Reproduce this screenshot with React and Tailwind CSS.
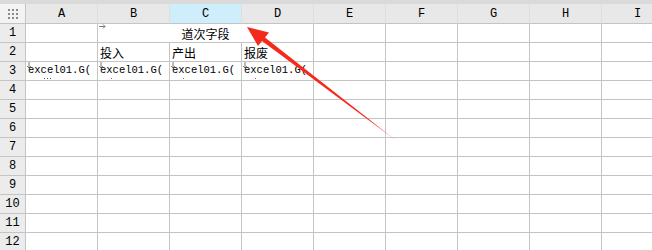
const cols = ["A", "B", "C", "D", "E", "F", "G", "H", "I"];
const rows = [1, 2, 3, 4, 5, 6, 7, 8, 9, 10, 11, 12];

const mono = { fontFamily: "'Liberation Mono', 'DejaVu Sans Mono', monospace" };
const cjk = { fontFamily: "'Noto Sans CJK SC', 'Noto Sans', sans-serif" };

function Cell({ children, className = "" }) {
  return (
    <div
      className={`relative w-[72px] shrink-0 h-[19px] border-r border-b border-[#c4c4c4] overflow-hidden ${className}`}
    >
      {children}
    </div>
  );
}

// little expand markers drawn by the sheet designer
function DownMark() {
  return (
    <svg className="absolute left-[0px] top-[0px]" width="6" height="7">
      <path d="M3 0 V6 M1 4 L3 6 L5 4" stroke="#7a7a7a" strokeWidth="1" fill="none" />
    </svg>
  );
}

function RightMark() {
  return (
    <svg className="absolute left-[1px] top-[0px]" width="7" height="5">
      <path d="M0 2.5 H6 M4 0.5 L6 2.5 L4 4.5" stroke="#7a7a7a" strokeWidth="1" fill="none" />
    </svg>
  );
}

function FormulaCell({ dots }) {
  return (
    <Cell>
      <DownMark />
      <span
        className="absolute left-[2px] top-[3px] text-[10.5px] leading-none text-black whitespace-nowrap"
        style={mono}
      >
        excel01.G(
      </span>
      {dots ? (
        <svg className="absolute left-[18px] top-[16px]" width="10" height="2">
          <rect x="0" y="0" width="1" height="1" fill="#555" />
          <rect x="3" y="0" width="1" height="1" fill="#555" />
          <rect x="6" y="0" width="1" height="1" fill="#555" />
        </svg>
      ) : (
        <span className="absolute left-[13px] top-[16px] w-[1px] h-[1px] bg-[#b040b0]" />
      )}
    </Cell>
  );
}

export default function App() {
  return (
    <div className="relative w-[652px] h-[250px] overflow-hidden bg-white">
      <div className="h-[4px] bg-[#dadada]" />

      {/* column headers */}
      <div className="flex h-[20px]">
        <div className="w-[26px] shrink-0 border-r border-b border-[#c4c4c4] bg-[#f3f3f3] flex items-center justify-center">
          <div className="grid grid-cols-3 gap-[2px]">
            {Array.from({ length: 9 }).map((_, i) => (
              <span key={i} className="w-[2px] h-[2px] bg-[#8a8a8a]" />
            ))}
          </div>
        </div>
        {cols.map((c) => (
          <div
            key={c}
            className={`w-[72px] shrink-0 border-r border-b border-r-[#dedede] border-b-[#c4c4c4] flex items-center justify-center text-[12px] text-black ${
              c === "C" ? "bg-[#cdeefa]" : "bg-[#e8e8e8]"
            }`}
            style={mono}
          >
            {c}
          </div>
        ))}
      </div>

      {rows.map((r) => (
        <div key={r} className="flex h-[19px]">
          <div
            className="w-[26px] shrink-0 h-[19px] border-r border-b border-[#c4c4c4] bg-[#ececec] flex items-center justify-center text-[12px] text-black"
            style={mono}
          >
            {r}
          </div>

          {r === 1 && (
            <>
              <Cell />
              <div className="relative w-[216px] shrink-0 h-[19px] border-r border-b border-[#c4c4c4] flex items-center justify-center">
                <RightMark />
                <span className="text-[12px] text-black pt-[2px]" style={cjk}>
                  道次字段
                </span>
              </div>
              {cols.slice(4).map((c) => (
                <Cell key={c} />
              ))}
            </>
          )}

          {r === 2 && (
            <>
              <Cell />
              {["投入", "产出", "报废"].map((t) => (
                <Cell key={t}>
                  <span className="absolute left-[2px] top-[1px] text-[12px] leading-[18px] text-black" style={cjk}>
                    {t}
                  </span>
                </Cell>
              ))}
              {cols.slice(4).map((c) => (
                <Cell key={c} />
              ))}
            </>
          )}

          {r === 3 && (
            <>
              <FormulaCell dots />
              <FormulaCell />
              <FormulaCell />
              <FormulaCell />
              {cols.slice(4).map((c) => (
                <Cell key={c} />
              ))}
            </>
          )}

          {r > 3 && cols.map((c) => <Cell key={c} />)}
        </div>
      ))}

      {/* annotation arrow */}
      <svg className="absolute left-0 top-0 pointer-events-none" width="652" height="250">
        <defs>
          <linearGradient id="fade" x1="247" y1="27" x2="398" y2="142" gradientUnits="userSpaceOnUse">
            <stop offset="0" stopColor="#f42a1c" />
            <stop offset="0.8" stopColor="#f42a1c" />
            <stop offset="1" stopColor="#ffb0a8" />
          </linearGradient>
        </defs>
        <polygon
          points="247,27 269,32.5 265,37.5 398,142 262,41 258,46"
          fill="url(#fade)"
        />
      </svg>
    </div>
  );
}
